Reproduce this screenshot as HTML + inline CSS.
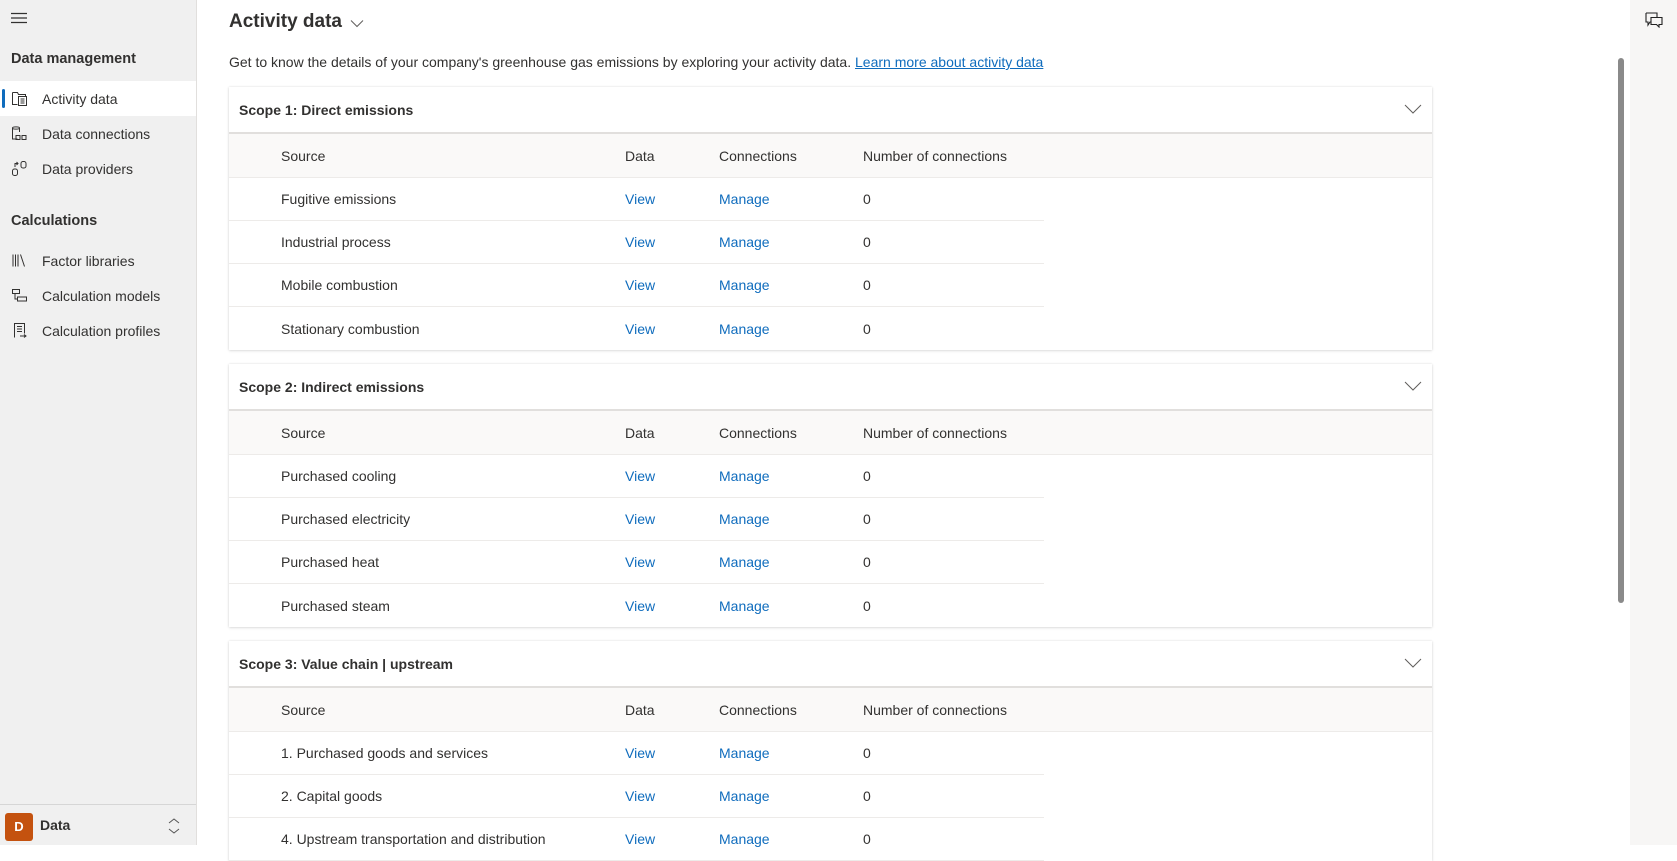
<!DOCTYPE html>
<html><head><meta charset="utf-8"><style>
*{box-sizing:border-box;margin:0;padding:0}
body{width:1677px;height:845px;overflow:hidden;font-family:"Liberation Sans",sans-serif;color:#323130;background:#fff;position:relative;font-size:14px}
.side{position:absolute;left:0;top:0;width:197px;height:845px;background:#f0f0f0;border-right:1px solid #e1dfdd}
.abs{position:absolute;white-space:nowrap}
.grp{left:11px;font-weight:bold;font-size:14.5px;color:#323130}
.nav{position:absolute;left:0;width:196px;height:35px;display:flex;align-items:center;font-size:14px}
.nav svg{margin-left:11px;margin-right:14px}
.nav.sel{background:#fff}
.nav.sel:before{content:"";position:absolute;left:2px;top:8px;width:3px;height:19px;background:#0f6cbd;border-radius:2px}
.card{position:absolute;left:229px;width:1203px;background:#fff;box-shadow:0 0 2px rgba(0,0,0,.12),0 1px 3px rgba(0,0,0,.1)}
.ch{height:47px;border-bottom:2px solid #e1dfdd;display:flex;align-items:center;padding-left:10px;font-weight:bold;font-size:14px;position:relative}
.ch svg{position:absolute;right:10px;top:17px}
.th{height:44px;background:#faf9f8;border-bottom:1px solid #edebe9;position:relative;font-size:14px}
.tr{height:43px;position:relative;border-bottom:1px solid #edebe9;width:815px}
.tr:last-child{border-bottom:none}
.c{position:absolute;top:50%;transform:translateY(-50%);white-space:nowrap}
.c1{left:52px}.c2{left:396px}.c3{left:490px}.c4{left:634px}
.lnk{color:#0f6cbd}
</style></head><body>
<div class="side">
<svg class="abs" style="left:11px;top:12px" width="17" height="12"><path d="M0 1.5H16M0 6H16M0 10.5H16" stroke="#323130" stroke-width="1.2"/></svg>
<div class="abs grp" style="top:51px">Data management</div>
<div class="nav sel" style="top:81px"><svg width="17" height="17" viewBox="0 0 17 17" fill="none" stroke="#323130"><path d="M1.5 2.5h5l1 2h7v2M1.5 2.5v12h5"/><rect x="7.5" y="6.5" width="8" height="9"/><path d="M9.5 9h4M9.5 11h4M9.5 13h4"/></svg>Activity data</div>
<div class="nav" style="top:116px"><svg width="17" height="17" viewBox="0 0 17 17" fill="none" stroke="#323130"><path d="M1.5 3c0-1.5 7-1.5 7 0v4M1.5 3v11h5M1.5 3c0 1.5 7 1.5 7 0"/><rect x="5" y="10.5" width="4" height="4"/><rect x="11" y="10.5" width="4" height="4"/></svg>Data connections</div>
<div class="nav" style="top:151px"><svg width="17" height="17" viewBox="0 0 17 17" fill="none" stroke="#323130"><rect x="1.5" y="9" width="5" height="6.5" rx="2"/><rect x="10" y="1.5" width="5" height="6.5" rx="2"/><path d="M4 7V3.5h3M5.5 2l1.5 1.5L5.5 5"/></svg>Data providers</div>
<div class="abs grp" style="top:213px">Calculations</div>
<div class="nav" style="top:243px"><svg width="17" height="17" viewBox="0 0 17 17" fill="none" stroke="#323130"><path d="M2 2.5v12M4.5 2.5v12M7 2.5v12M9.5 2.5l4 12"/></svg>Factor libraries</div>
<div class="nav" style="top:278px"><svg width="17" height="17" viewBox="0 0 17 17" fill="none" stroke="#323130"><rect x="1.5" y="2.5" width="7" height="4"/><rect x="6.5" y="10" width="9" height="4"/><path d="M4 6.5V12h2.5"/></svg>Calculation models</div>
<div class="nav" style="top:313px"><svg width="17" height="17" viewBox="0 0 17 17" fill="none" stroke="#323130"><path d="M3.5 15.5V1.5h10v10M6 4.5h5M6 7h5M6 9.5h5M9 14h6M13 12.5l2 1.5-2 1.5"/></svg>Calculation profiles</div>
<div class="abs" style="left:0;top:804px;width:196px;border-top:1px solid #d6d6d6"></div>
<div class="abs" style="left:5px;top:813px;width:28px;height:28px;background:#c4520f;border-radius:3px;color:#fff;font-weight:bold;font-size:13px;text-align:center;line-height:28px">D</div>
<div class="abs" style="left:40px;top:817px;font-weight:bold;font-size:14px">Data</div>
<svg class="abs" style="left:167px;top:817px" width="14" height="18" fill="none" stroke="#555"><path d="M2 6l5-4 5 4M2 12l5 4 5-4"/></svg>
</div>

<div class="abs" style="left:229px;top:11px;font-size:19px;font-weight:bold;color:#323130">Activity data</div>
<svg class="abs" style="left:350px;top:19px" width="14" height="9" fill="none" stroke="#605e5c"><path d="M1 1.5l6 6 6-6"/></svg>
<div class="abs" style="left:229px;top:54px;font-size:14px">Get to know the details of your company's greenhouse gas emissions by exploring your activity data. <span style="color:#0f6cbd;text-decoration:underline">Learn more about activity data</span></div>

<div class="card" style="top:87px">
<div class="ch">Scope 1: Direct emissions<svg width="18" height="10" fill="none" stroke="#605e5c"><path d="M1 1l8 8 8-8"/></svg></div>
<div class="th"><span class="c c1">Source</span><span class="c c2">Data</span><span class="c c3">Connections</span><span class="c c4">Number of connections</span></div>
<div class="tr"><span class="c c1">Fugitive emissions</span><span class="c c2 lnk">View</span><span class="c c3 lnk">Manage</span><span class="c c4">0</span></div>
<div class="tr"><span class="c c1">Industrial process</span><span class="c c2 lnk">View</span><span class="c c3 lnk">Manage</span><span class="c c4">0</span></div>
<div class="tr"><span class="c c1">Mobile combustion</span><span class="c c2 lnk">View</span><span class="c c3 lnk">Manage</span><span class="c c4">0</span></div>
<div class="tr"><span class="c c1">Stationary combustion</span><span class="c c2 lnk">View</span><span class="c c3 lnk">Manage</span><span class="c c4">0</span></div>
</div>

<div class="card" style="top:364px">
<div class="ch">Scope 2: Indirect emissions<svg width="18" height="10" fill="none" stroke="#605e5c"><path d="M1 1l8 8 8-8"/></svg></div>
<div class="th"><span class="c c1">Source</span><span class="c c2">Data</span><span class="c c3">Connections</span><span class="c c4">Number of connections</span></div>
<div class="tr"><span class="c c1">Purchased cooling</span><span class="c c2 lnk">View</span><span class="c c3 lnk">Manage</span><span class="c c4">0</span></div>
<div class="tr"><span class="c c1">Purchased electricity</span><span class="c c2 lnk">View</span><span class="c c3 lnk">Manage</span><span class="c c4">0</span></div>
<div class="tr"><span class="c c1">Purchased heat</span><span class="c c2 lnk">View</span><span class="c c3 lnk">Manage</span><span class="c c4">0</span></div>
<div class="tr"><span class="c c1">Purchased steam</span><span class="c c2 lnk">View</span><span class="c c3 lnk">Manage</span><span class="c c4">0</span></div>
</div>

<div class="card" style="top:641px;height:220px">
<div class="ch">Scope 3: Value chain | upstream<svg width="18" height="10" fill="none" stroke="#605e5c"><path d="M1 1l8 8 8-8"/></svg></div>
<div class="th"><span class="c c1">Source</span><span class="c c2">Data</span><span class="c c3">Connections</span><span class="c c4">Number of connections</span></div>
<div class="tr"><span class="c c1">1. Purchased goods and services</span><span class="c c2 lnk">View</span><span class="c c3 lnk">Manage</span><span class="c c4">0</span></div>
<div class="tr"><span class="c c1">2. Capital goods</span><span class="c c2 lnk">View</span><span class="c c3 lnk">Manage</span><span class="c c4">0</span></div>
<div class="tr" style="border-bottom:1px solid #edebe9"><span class="c c1">4. Upstream transportation and distribution</span><span class="c c2 lnk">View</span><span class="c c3 lnk">Manage</span><span class="c c4">0</span></div>
</div>

<div class="abs" style="left:1618px;top:58px;width:6px;height:545px;background:#8a8a8a;border-radius:3px"></div>
<div class="abs" style="left:1630px;top:0;width:47px;height:845px;background:#f7f6f5"></div>
<svg class="abs" style="left:1645px;top:12px" width="18" height="16" fill="none" stroke="#222" stroke-width="1.1"><path d="M1 1h11v4M1 1v9h2v3l2-3h1"/><path d="M6 5.5h11v7h-3v2.5l-2.5-2.5H6z"/></svg>
</body></html>
